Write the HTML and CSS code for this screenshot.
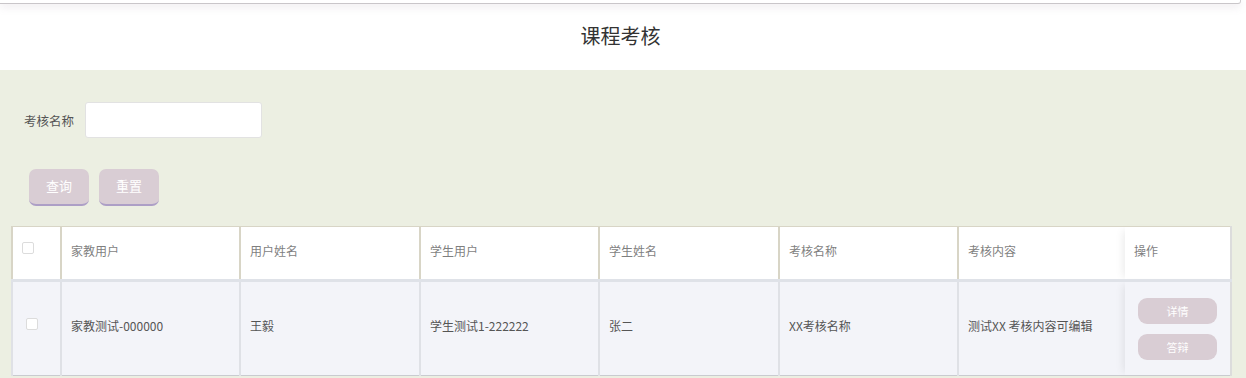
FILE: index.html
```html
<!DOCTYPE html>
<html lang="zh">
<head>
<meta charset="utf-8">
<link rel="stylesheet" href="styles.css">
</head>
<body>
<div class="topbar"></div>
<div class="title">课程考核</div>
<div class="panel">
  <div class="form-row">
    <label class="label">考核名称</label>
    <input class="input" type="text">
  </div>
  <div class="btn-row">
    <button class="btn">查询</button>
    <button class="btn">重置</button>
  </div>
  <div class="table-wrap">
    <table class="table">
      <colgroup>
        <col style="width:49px"><col style="width:179px"><col style="width:180px"><col style="width:179px"><col style="width:180px"><col style="width:179px"><col style="width:167px"><col style="width:106px">
      </colgroup>
      <thead>
        <tr>
          <th class="chk-cell"><span class="chk"></span></th>
          <th>家教用户</th>
          <th>用户姓名</th>
          <th>学生用户</th>
          <th>学生姓名</th>
          <th>考核名称</th>
          <th>考核内容</th>
          <th class="ops">操作</th>
        </tr>
      </thead>
      <tbody>
        <tr>
          <td class="chk-cell"><span class="chk body"></span></td>
          <td>家教测试-000000</td>
          <td>王毅</td>
          <td>学生测试1-222222</td>
          <td>张二</td>
          <td>XX考核名称</td>
          <td>测试XX 考核内容可编辑</td>
          <td class="ops">
            <div class="ops-btns">
              <button class="sbtn">详情</button>
              <button class="sbtn">答辩</button>
            </div>
          </td>
        </tr>
      </tbody>
    </table>
  </div>
</div>
</body>
</html>
```
FILE: styles.css
```css
* { box-sizing: border-box; }
html, body { margin: 0; padding: 0; }
body {
  width: 1246px;
  height: 378px;
  overflow: hidden;
  background: #fff;
  font-family: "Noto Sans CJK SC", "Liberation Sans", sans-serif;
}
.topbar {
  height: 4px;
  margin-right: 5px;
  background: #fff;
  border-bottom: 1px solid #c9c6c9;
  border-right: 1px solid #d0cdd0;
  border-radius: 0 0 3px 0;
  box-shadow: 0 2px 8px rgba(150, 130, 150, 0.25);
}
.title {
  height: 66px;
  display: flex;
  align-items: center;
  justify-content: center;
  font-size: 20px;
  color: #333;
  padding: 0 5px 4px 0;
}
.panel {
  background: #ecefe2;
  height: 308px;
  padding: 32px 0 0 11px;
}
.form-row {
  display: flex;
  align-items: center;
  padding-left: 13px;
  gap: 11px;
}
.label {
  font-size: 12.5px;
  color: #555;
}
.input {
  width: 177px;
  height: 36px;
  border: 1px solid #e2e2e2;
  border-radius: 3px;
  background: #fff;
  outline: none;
}
.btn-row {
  display: flex;
  gap: 10px;
  margin-top: 31px;
  padding-left: 18px;
}
.btn {
  width: 60px;
  height: 37px;
  border: none;
  border-bottom: 2px solid #ad9fc6;
  border-radius: 7px;
  background: #d9cdd4;
  color: #fff;
  font-family: inherit;
  font-size: 13px;
  padding: 0 0 2px;
}
.table-wrap {
  margin-top: 20px;
  width: 1219px;
}
.table {
  border-collapse: collapse;
  table-layout: fixed;
  width: 1219px;
}
.table th {
  height: 54px;
  background: #fff;
  border-left: 2px solid #d8d5c6;
  border-top: 1px solid #d8d5c6;
  border-bottom: 3px solid #dfe2e8;
  text-align: left;
  font-weight: normal;
  font-size: 12px;
  color: #7f7f7f;
  padding: 0 0 6px 9px;
}
.table th.ops {
  border-left: none;
  border-right: 2px solid #dcdcdc;
  box-shadow: -6px 0 8px -4px rgba(0,0,0,0.08);
  padding-left: 9px;
}
.table td {
  height: 95px;
  background: #f3f4f9;
  border-left: 2px solid #dfe1e6;
  border-bottom: 1px solid #c9cbd0;
  font-size: 12px;
  color: #555;
  padding: 0 0 6px 9px;
}
.table td.ops {
  border-left: none;
  border-right: 2px solid #dcdcdc;
  box-shadow: -6px 0 8px -4px rgba(0,0,0,0.08);
  padding: 0 0 0 13px;
}
.table .chk-cell {
  vertical-align: top;
  padding: 0;
}
.chk {
  display: block;
  width: 12px;
  height: 12px;
  border: 1px solid #dcdcdc;
  border-radius: 2px;
  background: #fff;
  margin: 15px 0 0 9px;
}
.chk.body {
  margin: 36px 0 0 13px;
}
.ops-btns {
  display: flex;
  flex-direction: column;
  gap: 10px;
}
.sbtn {
  width: 79px;
  height: 26px;
  border: none;
  border-radius: 9px;
  background: #d9cdd4;
  color: #fff;
  font-family: inherit;
  font-size: 11px;
  padding: 0;
}
```
